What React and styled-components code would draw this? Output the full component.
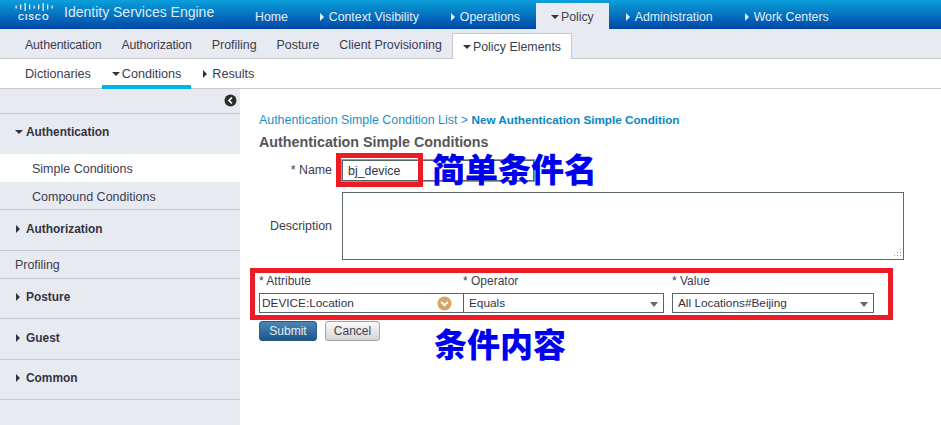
import React from "react";
import styled, { createGlobalStyle, css } from "styled-components";

const GlobalStyle = createGlobalStyle`
  html, body {
    margin: 0;
    padding: 0;
    background: #ffffff;
  }
  body {
    font-family: "Liberation Sans", Arial, sans-serif;
    font-size: 12.4px;
    color: #3a3a4a;
  }
  * {
    box-sizing: border-box;
  }
`;

const Page = styled.div`
  width: 941px;
  height: 425px;
  overflow: hidden;
  display: flex;
  flex-direction: column;
`;

// Header
const TopBar = styled.header`
  height: 29px;
  display: flex;
  background: linear-gradient(#0a9fdb, #0047a6);
`;

const Brand = styled.div`
  width: 240px;
  flex: none;
  display: flex;
  padding-left: 15px;
`;

const LogoWrap = styled.div`
  width: 49px;
  display: flex;
  flex-direction: column;
  padding-top: 3px;
`;

const LogoText = styled.span`
  font-size: 8.5px;
  line-height: 8px;
  font-weight: bold;
  letter-spacing: 0.9px;
  color: #e4eef8;
  padding-left: 3px;
  margin-top: 2px;
`;

const BrandName = styled.span`
  font-size: 14px;
  line-height: 24px;
  color: #dfeaf6;
`;

const TopNav = styled.nav`
  display: flex;
  gap: 1px;
`;

const TopItem = styled.div`
  display: flex;
  align-items: center;
  padding: 4px 15px 0;
  font-size: 12.3px;
  white-space: nowrap;
  color: ${(p) => (p.$active ? "#44444f" : "#e6eef8")};
  ${(p) =>
    p.$active &&
    css`
      margin-top: 3px;
      padding-top: 1px;
      background: #e8eaf2;
    `}
`;

const Caret = styled.i`
  display: inline-block;
  flex: none;
  width: 10px;
  height: 8px;
  position: relative;
  &::before {
    content: "";
    position: absolute;
    ${(p) =>
      p.$open
        ? css`
            left: 0;
            top: 2px;
            border-left: 4px solid transparent;
            border-right: 4px solid transparent;
            border-top: 4px solid ${p.$color || "#33333d"};
          `
        : css`
            left: 1px;
            top: 0;
            border-top: 4px solid transparent;
            border-bottom: 4px solid transparent;
            border-left: 4px solid ${p.$color || "#33333d"};
          `}
  }
`;

const SubBar = styled.nav`
  height: 30px;
  display: flex;
  padding-left: 15px;
  background: #e8eaf2;
  border-bottom: 1px solid #c6c8cc;
`;

const SubItem = styled.div`
  display: flex;
  align-items: center;
  padding: 2px 10px 0;
  white-space: nowrap;
  color: #3c3c50;
  ${(p) => p.$tight && "letter-spacing: -0.15px;"}
  ${(p) =>
    p.$active &&
    css`
      margin-top: 4px;
      margin-bottom: -1px;
      padding-top: 0;
      background: #ffffff;
      border: 1px solid #c6c8cc;
      border-bottom: none;
    `}
`;

const TabBar = styled.nav`
  height: 30px;
  display: flex;
  gap: 1px;
  padding-left: 15px;
  font-size: 12.6px;
  background: #ffffff;
  border-bottom: 1px solid #c8c8cc;
`;

const TabItem = styled.div`
  display: flex;
  align-items: center;
  padding: 1px 10px 0;
  color: #3c3c50;
  ${(p) => p.$active && "border-bottom: 4px solid #00b4e6; margin-bottom: -1px; padding-top: 4px;"}
`;

// Body
const Body = styled.div`
  flex: 1;
  display: flex;
  min-height: 0;
`;

const Sidebar = styled.aside`
  width: 240px;
  flex: none;
  background: #e8eaf2;
`;

const CollapseRow = styled.div`
  height: 25px;
  display: flex;
  align-items: center;
  justify-content: flex-end;
  padding: 0 3px 2px 0;
  border-bottom: 1px solid #c8c8cc;
`;

const Section = styled.div`
  display: flex;
  align-items: center;
  height: ${(p) => p.$height || 41}px;
  padding: 0 0 3px 15px;
  font-size: 11.9px;
  font-weight: bold;
  color: #33333f;
  border-bottom: 1px solid #c8c8cc;
  i {
    width: 11px;
  }
`;

const OpenSection = styled(Section)`
  height: 40px;
  padding-bottom: 4px;
  border-bottom: none;
`;

const PlainSection = styled(Section)`
  height: 28px;
  padding-bottom: 0;
  font-size: 12.4px;
  font-weight: normal;
  color: #3c3c50;
`;

const SideLink = styled.div`
  display: flex;
  align-items: center;
  height: 28px;
  padding: 2px 0 0 32px;
  font-size: 12.5px;
  color: #3c3c50;
  ${(p) => (p.$active ? "background: #ffffff;" : "border-bottom: 1px solid #c8c8cc;")}
`;

const Main = styled.main`
  position: relative;
  flex: 1;
  padding: 24px 37px 0 19px;
`;

const Breadcrumb = styled.div`
  line-height: 14px;
  white-space: nowrap;
  color: #1c8fc8;
  b {
    font-size: 11.7px;
    color: #0a86c4;
  }
`;

const Title = styled.h1`
  margin: 7px 0 0;
  font-size: 14.3px;
  line-height: 16px;
  font-weight: bold;
  color: #555558;
`;

const FieldRow = styled.div`
  display: flex;
  align-items: center;
  margin-top: ${(p) => p.$mt}px;
`;

const FieldLabel = styled.label`
  width: 73px;
  margin-right: 10px;
  padding-bottom: ${(p) => p.$pb || 0}px;
  text-align: right;
  white-space: nowrap;
  color: #3c3c50;
`;

const NameInput = styled.div`
  width: 192px;
  height: 21px;
  padding-left: 5px;
  display: flex;
  align-items: center;
  border: 1px solid #55656c;
  outline: 1px solid #3cc0d8;
  color: #33333f;
`;

const TextArea = styled.div`
  position: relative;
  flex: 1;
  height: 68px;
  border: 1px solid #5c6a70;
`;

const Grip = styled.svg`
  position: absolute;
  right: 1px;
  bottom: 1px;
`;

const ConditionRow = styled.div`
  display: flex;
  margin-top: 14px;
`;

const ConditionColumn = styled.div`
  width: ${(p) => p.$width}px;
  margin-right: ${(p) => p.$gap || 0}px;
  display: flex;
  flex-direction: column;
`;

const ConditionLabel = styled.label`
  height: 19px;
  font-size: 12px;
  line-height: 14px;
  color: #3c3c50;
`;

const SelectBox = styled.div`
  height: 20px;
  display: flex;
  align-items: center;
  justify-content: space-between;
  padding: 0 5px 0 5px;
  font-size: 11.8px;
  border: 1px solid #55656c;
  color: #33333f;
`;

const ComboBox = styled(SelectBox)`
  padding: 0 11px 0 2px;
  border-right: none;
`;

const SelectArrow = styled.i`
  border-left: 4px solid transparent;
  border-right: 4px solid transparent;
  border-top: 5px solid #666a70;
  margin-top: 3px;
`;

const Buttons = styled.div`
  display: flex;
  gap: 8px;
  margin-top: 8px;
`;

const Button = styled.button`
  height: 20px;
  padding: 0;
  font-family: inherit;
  font-size: 12px;
  border-radius: 3px;
  ${(p) =>
    p.$primary
      ? css`
          width: 58px;
          color: #e4ecf4;
          border: 1px solid #245a8c;
          background: linear-gradient(#4a86b4, #1f5688);
        `
      : css`
          width: 55px;
          color: #444450;
          border: 1px solid #a4a4a4;
          background: linear-gradient(#fafafa, #d4d4d4);
        `}
`;

// Annotations drawn over the screenshot
const RedBox = styled.div`
  position: absolute;
  left: ${(p) => p.$x}px;
  top: ${(p) => p.$y}px;
  width: ${(p) => p.$w}px;
  height: ${(p) => p.$h}px;
  border: 5px solid #ed1c24;
`;

const Note = styled.span`
  position: absolute;
  left: ${(p) => p.$x}px;
  top: ${(p) => p.$y}px;
  font-family: "Noto Sans CJK SC", sans-serif;
  font-size: 33px;
  line-height: 36px;
  font-weight: 900;
  color: #0000f0;
  white-space: nowrap;
`;

function CiscoLogo() {
  const bars = [
    [0.5, 3], [5, 5], [9.5, 8], [14, 5], [18.5, 3], [23, 5], [27.5, 8], [32, 5], [36.5, 3],
  ];
  return (
    <LogoWrap>
      <svg width="38" height="8" viewBox="0 0 38 8">
        {bars.map(([x, h]) => (
          <rect key={x} x={x} y={(8 - h) / 2} width="1.3" height={h} fill="#e4eef8" />
        ))}
      </svg>
      <LogoText>CISCO</LogoText>
    </LogoWrap>
  );
}

function CollapseIcon() {
  return (
    <svg width="13" height="13" viewBox="0 0 13 13">
      <circle cx="6.5" cy="6.5" r="6" fill="#2e2e2e" />
      <path d="M7.8 3.6 5 6.5l2.8 2.9" fill="none" stroke="#ffffff" strokeWidth="1.6" />
    </svg>
  );
}

function OrangeChevron() {
  return (
    <svg width="15" height="15" viewBox="0 0 15 15">
      <circle cx="7.5" cy="7.5" r="7" fill="#d8a468" />
      <path d="M4.2 6 7.5 9.2 10.8 6" fill="none" stroke="#ffffff" strokeWidth="1.8" />
    </svg>
  );
}

export default function App() {
  return (
    <Page>
      <GlobalStyle />
      <TopBar>
        <Brand>
          <CiscoLogo />
          <BrandName>Identity Services Engine</BrandName>
        </Brand>
        <TopNav>
          <TopItem>Home</TopItem>
          <TopItem><Caret $color="#e6eef8" />Context Visibility</TopItem>
          <TopItem><Caret $color="#e6eef8" />Operations</TopItem>
          <TopItem $active><Caret $open />Policy</TopItem>
          <TopItem><Caret $color="#e6eef8" />Administration</TopItem>
          <TopItem><Caret $color="#e6eef8" />Work Centers</TopItem>
        </TopNav>
      </TopBar>

      <SubBar>
        <SubItem $tight>Authentication</SubItem>
        <SubItem $tight>Authorization</SubItem>
        <SubItem>Profiling</SubItem>
        <SubItem>Posture</SubItem>
        <SubItem>Client Provisioning</SubItem>
        <SubItem $active><Caret $open />Policy Elements</SubItem>
      </SubBar>

      <TabBar>
        <TabItem>Dictionaries</TabItem>
        <TabItem $active><Caret $open />Conditions</TabItem>
        <TabItem><Caret />Results</TabItem>
      </TabBar>

      <Body>
        <Sidebar>
          <CollapseRow><CollapseIcon /></CollapseRow>
          <OpenSection><Caret $open />Authentication</OpenSection>
          <SideLink $active>Simple Conditions</SideLink>
          <SideLink>Compound Conditions</SideLink>
          <Section><Caret />Authorization</Section>
          <PlainSection>Profiling</PlainSection>
          <Section $height={40}><Caret />Posture</Section>
          <Section><Caret />Guest</Section>
          <Section $height={40}><Caret />Common</Section>
        </Sidebar>

        <Main>
          <Breadcrumb>
            Authentication Simple Condition List &gt; <b>New Authentication Simple Condition</b>
          </Breadcrumb>
          <Title>Authentication Simple Conditions</Title>
          <FieldRow $mt={10}>
            <FieldLabel $pb={2}>* Name</FieldLabel>
            <NameInput>bj_device</NameInput>
          </FieldRow>
          <FieldRow $mt={11}>
            <FieldLabel>Description</FieldLabel>
            <TextArea>
              <Grip width="10" height="10" viewBox="0 0 10 10">
                <path d="M8 1h1v1H8zM5 4h1v1H5zM8 4h1v1H8zM2 7h1v1H2zM5 7h1v1H5zM8 7h1v1H8z" fill="#9a9a9a" />
              </Grip>
            </TextArea>
          </FieldRow>
          <ConditionRow>
            <ConditionColumn $width={204}>
              <ConditionLabel>* Attribute</ConditionLabel>
              <ComboBox>
                DEVICE:Location
                <OrangeChevron />
              </ComboBox>
            </ConditionColumn>
            <ConditionColumn $width={201} $gap={8}>
              <ConditionLabel>* Operator</ConditionLabel>
              <SelectBox>Equals<SelectArrow /></SelectBox>
            </ConditionColumn>
            <ConditionColumn $width={202}>
              <ConditionLabel>* Value</ConditionLabel>
              <SelectBox>All Locations#Beijing<SelectArrow /></SelectBox>
            </ConditionColumn>
          </ConditionRow>
          <Buttons>
            <Button $primary>Submit</Button>
            <Button>Cancel</Button>
          </Buttons>

          <RedBox $x={96} $y={64} $w={87} $h={34} />
          <Note $x={192} $y={61}>简单条件名</Note>
          <RedBox $x={10} $y={179} $w={643} $h={52} />
          <Note $x={194} $y={236}>条件内容</Note>
        </Main>
      </Body>
    </Page>
  );
}
